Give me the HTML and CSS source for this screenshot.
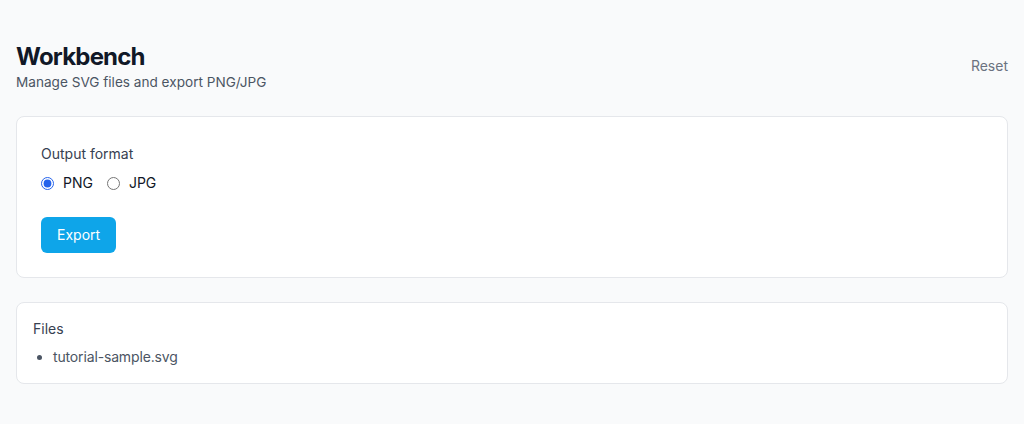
FILE: index.html
```html
<!DOCTYPE html>
<html lang="en">
<head>
<meta charset="utf-8">
<title>Workbench</title>
<link rel="stylesheet" href="styles.css">
</head>
<body>
<main class="page">
  <header class="header">
    <div class="heading">
      <h1 class="title">Workbench</h1>
      <p class="subtitle">Manage SVG files and export PNG/JPG</p>
    </div>
    <button class="reset" type="button">Reset</button>
  </header>

  <section class="card card-export">
    <div class="label">Output format</div>
    <div class="radios">
      <label class="radio"><input type="radio" name="fmt" checked> <span>PNG</span></label>
      <label class="radio"><input type="radio" name="fmt"> <span>JPG</span></label>
    </div>
    <button class="export" type="button">Export</button>
  </section>

  <section class="card card-files">
    <div class="files-title">Files</div>
    <ul class="file-list">
      <li>tutorial-sample.svg</li>
    </ul>
  </section>
</main>
</body>
</html>
```
FILE: styles.css
```css
* { box-sizing: border-box; }
html, body { margin: 0; padding: 0; }
body {
  background: #f9fafb;
  font-family: Inter, "Noto Sans", Arial, sans-serif;
  color: #111827;
  font-size: 14px;
  line-height: 20px;
}
.page {
  padding: 40px 16px;
}
.header {
  display: flex;
  align-items: center;
  justify-content: space-between;
}
.title {
  margin: 0;
  padding-top: 2px;
  font-size: 24px;
  line-height: 30px;
  font-weight: 700;
  letter-spacing: -0.8px;
  color: #111827;
}
.subtitle {
  margin: 0;
  color: #4b5563;
  font-size: 13.6px;
  line-height: 20px;
}
.reset {
  background: none;
  border: 0;
  padding: 0;
  font: inherit;
  color: #6b7280;
  font-size: 14px;
  cursor: pointer;
}
.card {
  background: #fff;
  border: 1px solid #e5e7eb;
  border-radius: 8px;
}
.card-export {
  margin-top: 24px;
  padding: 27px 24px 24px;
}
.label {
  color: #374151;
}
.radios {
  display: flex;
  gap: 14px;
  margin-top: 9px;
  height: 20px;
  align-items: center;
}
.radio {
  display: flex;
  align-items: center;
  gap: 9px;
  color: #111827;
}
.radio input {
  margin: 0;
  width: 13px;
  height: 13px;
  accent-color: #2563eb;
}
.export {
  margin-top: 24px;
  display: block;
  height: 36px;
  padding: 0 16px;
  background: #0ea5e9;
  color: #fff;
  border: 0;
  border-radius: 6px;
  font: inherit;
  font-size: 14px;
}
.card-files {
  margin-top: 24px;
  padding: 16px;
}
.files-title {
  color: #374151;
}
.file-list {
  margin: 8px 0 0;
  padding-left: 20px;
  color: #4b5563;
  letter-spacing: -0.15px;
}
```
